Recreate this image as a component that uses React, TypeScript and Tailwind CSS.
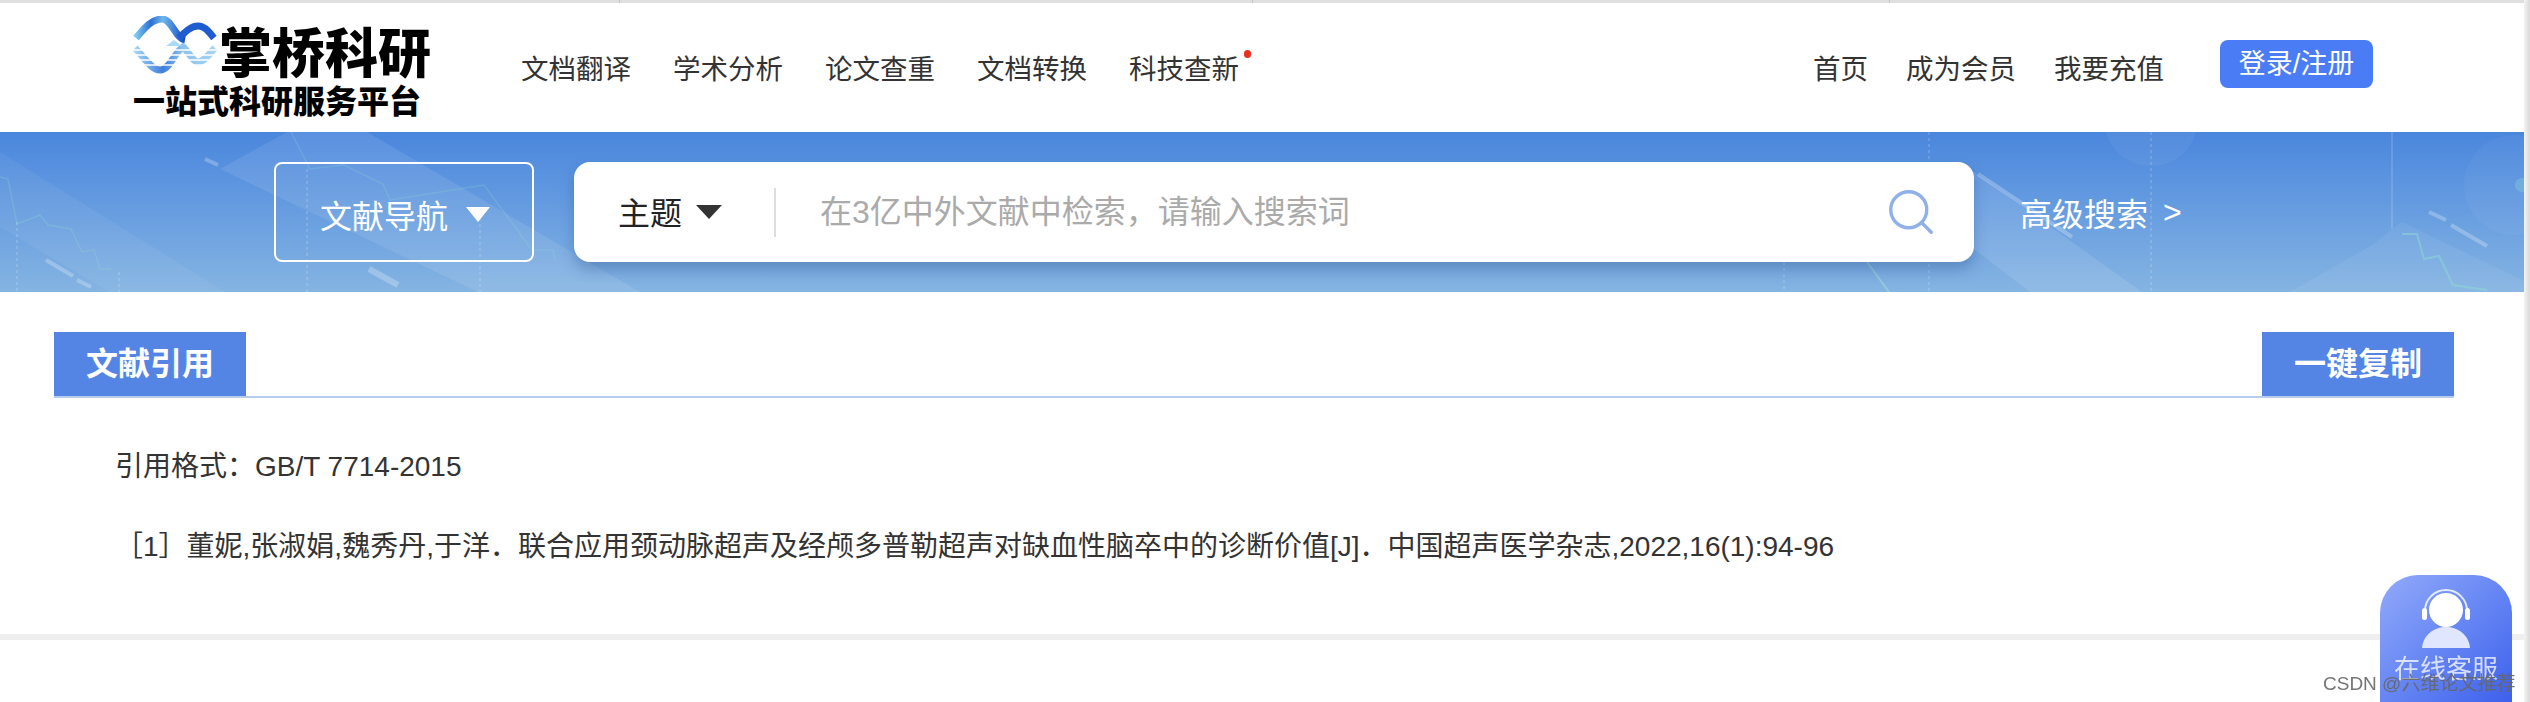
import { Search } from 'lucide-react';

const cjk = "font-['Liberation_Sans','Noto_Sans_CJK_SC',sans-serif]";

const leftNav = ['文档翻译', '学术分析', '论文查重', '文档转换', '科技查新'];
const rightNav = ['首页', '成为会员', '我要充值'];

function Logo() {
  return (
    <div className="w-[300px] shrink-0 pt-[13px]">
      <div className="flex items-start">
        <svg width="84" height="58" viewBox="0 0 84 58" className="shrink-0" fill="none">
          <defs>
            <linearGradient id="waveTop" x1="0" y1="0" x2="1" y2="0">
              <stop offset="0" stopColor="#7cc8f0" />
              <stop offset="0.3" stopColor="#2c6fd6" />
              <stop offset="0.55" stopColor="#6fb8ec" />
              <stop offset="1" stopColor="#1448c4" />
            </linearGradient>
            <linearGradient id="waveBottom" x1="0" y1="0" x2="1" y2="0">
              <stop offset="0" stopColor="#a6d6f4" />
              <stop offset="0.35" stopColor="#3f7fdc" />
              <stop offset="0.6" stopColor="#8cc4ee" />
              <stop offset="1" stopColor="#a6d4f2" />
            </linearGradient>
          </defs>
          <path d="M3 22 C10 14 18 3 29 3 C39 3 42 22 52 24" stroke="url(#waveTop)" strokeWidth="7" />
          <path d="M46 22 C52 16 58 10 65 10 C72 10 76 16 81 22" stroke="#1f5cd0" strokeWidth="7" />
          <path d="M2 32 C10 40 18 54 27 54 C37 54 40 38 50 31 C56 36 60 46 65 46 C71 46 76 38 82 32" stroke="url(#waveBottom)" strokeWidth="7" />
          <path d="M33 30 L41 24 L49 30 Z" fill="#a9dcf6" />
          <path d="M0 34 H84 M0 39 H84 M0 44 H84 M0 49 H84" stroke="#ffffff" strokeWidth="1.3" />
        </svg>
        <span className="ml-[2px] mt-[4px] text-[53px] leading-[60px] font-black text-black whitespace-nowrap font-['Noto_Sans_CJK_SC',serif]">掌桥科研</span>
      </div>
      <div className="mt-[2px] text-[32px] leading-[34px] font-black text-black whitespace-nowrap font-['Noto_Sans_CJK_SC',serif]">一站式科研服务平台</div>
    </div>
  );
}

function BannerArt() {
  return (
    <svg className="absolute inset-0 w-full h-full" viewBox="0 0 2530 160" preserveAspectRatio="none" fill="none">
      {/* light diagonal bands */}
      <path d="M220 37 L287 0 L367 0 L640 160 L478 160 Z" fill="#ffffff" fillOpacity="0.09" />
      <path d="M0 20 L225 160 L110 160 L0 95 Z" fill="#ffffff" fillOpacity="0.05" />
      <path d="M1960 30 L2142 160 L2030 160 L1900 60 Z" fill="#ffffff" fillOpacity="0.1" />
      <path d="M2372 113 L2402 90 L2530 152 L2530 160 L2290 160 Z" fill="#ffffff" fillOpacity="0.06" />
      <circle cx="2514" cy="53" r="50" fill="#ffffff" fillOpacity="0.04" />
      <circle cx="2151" cy="-13" r="47" fill="#ffffff" fillOpacity="0.05" />
      <circle cx="2522" cy="53" r="7" fill="#8fe0d0" fillOpacity="0.3" />
      {/* chart lines */}
      <path d="M0 45 L8 47 L17 92 L40 83 L48 93 L71 97 L82 120 L94 118 L100 137 L111 137" stroke="#8fe0d0" strokeOpacity="0.25" strokeWidth="1.5" />
      <path d="M291 0 L310 37 L344 33 L383 52 L390 68 L484 53 L532 118 L553 118 L555 128" stroke="#8fe0d0" strokeOpacity="0.22" strokeWidth="1.5" />
      <path d="M2402 102 L2417 102 L2424 127 L2439 124 L2453 153 L2487 158" stroke="#8fe0d0" strokeOpacity="0.45" strokeWidth="2" />
      <path d="M1867 130 L1889 160" stroke="#a5e0d5" strokeOpacity="0.5" strokeWidth="2" />
      {/* dashes */}
      <path d="M46 128 L73 144 M77 148 L91 155 M205 27 L218 33 M2429 80 L2446 88 M2451 93 L2487 114 M1978 42 L2072 105" stroke="#ffffff" strokeOpacity="0.25" strokeWidth="4" />
      <path d="M369 137 L398 153" stroke="#ffffff" strokeOpacity="0.25" strokeWidth="6" />
      {/* dotted verticals */}
      <path d="M17 90 V160 M119 140 V160 M307 37 V160 M480 80 V160 M1784 130 V160 M1929 0 V160 M2151 0 V160" stroke="#ffffff" strokeOpacity="0.2" strokeWidth="1.5" strokeDasharray="3 3" />
      <path d="M2392 0 V97" stroke="#ffffff" strokeOpacity="0.18" strokeWidth="1.5" />
    </svg>
  );
}

function SectionTitle() {
  return (
    <div className="flex justify-between ml-[54px] mr-[76px] h-[66px] border-b-2 border-[#b5cdee]">
      <div className="w-[192px] h-[64px] bg-[#5585e4] flex items-center justify-center text-white text-[32px] font-bold">文献引用</div>
      <div className="w-[192px] h-[64px] bg-[#5585e4] flex items-center justify-center text-white text-[32px] font-bold">一键复制</div>
    </div>
  );
}

function ChatButton() {
  return (
    <div className="fixed left-[2380px] top-[575px] w-[132px] h-[127px] rounded-t-[38px] overflow-hidden bg-gradient-to-br from-[#93aafa] to-[#3e5fec] flex flex-col items-center blur-[0.6px]">
      <svg width="48" height="60" viewBox="0 0 48 60" fill="none" className="mt-[14px]">
        <path d="M3 28 V22 A21 21 0 0 1 45 22 V28" stroke="#ffffff" strokeOpacity="0.8" strokeWidth="2" />
        <rect x="0" y="19" width="5" height="12" rx="2.5" fill="#fff" />
        <rect x="43" y="19" width="5" height="12" rx="2.5" fill="#fff" />
        <circle cx="24" cy="21" r="17" fill="#fff" />
        <path d="M0 59 C1 46 12 38 24 38 C36 38 47 46 48 59 Z" fill="#dfe6fd" />
      </svg>
      <div className="mt-[5px] text-[26px] leading-[30px] text-white/75 whitespace-nowrap">在线客服</div>
    </div>
  );
}

export default function App() {
  return (
    <div className={`${cjk} w-[2530px] h-[702px] overflow-hidden bg-white relative text-[#333]`}>
      <div className="h-[3px] flex bg-[#dfdfdf]">
        <div className="w-[620px] border-r border-[#c8c8c8]" />
        <div className="w-[633px] border-r border-[#c8c8c8]" />
        <div className="w-[637px] border-r border-[#c8c8c8]" />
      </div>

      {/* top nav */}
      <header className="h-[129px] flex pl-[133px]">
        <Logo />
        <nav className="flex items-center gap-[42px] ml-[88px] pt-[5px] text-[27.5px] text-[#333] h-full">
          {leftNav.map((item) => (
            <span key={item} className="relative whitespace-nowrap">
              {item}
              {item === '科技查新' && <i className="absolute right-[-12px] top-[1px] w-[7px] h-[8px] rounded-full bg-[#e8301f]" />}
            </span>
          ))}
        </nav>
        <nav className="ml-auto flex items-center gap-[38px] text-[27.5px] pt-[5px] h-full">
          {rightNav.map((item) => (
            <span key={item} className="whitespace-nowrap">{item}</span>
          ))}
          <button className="w-[153px] h-[48px] ml-[18px] mr-[157px] -mt-[12px] rounded-[8px] bg-[#4a7cf6] text-white text-[27px] leading-[48px]">登录/注册</button>
        </nav>
      </header>

      {/* search banner */}
      <section className="h-[160px] relative bg-gradient-to-b from-[#4a86dd] to-[#85b4e2] flex items-center pl-[274px]">
        <BannerArt />
        <div className="relative w-[260px] h-[100px] border-2 border-white rounded-[8px] flex items-center pl-[44px] text-white text-[32px]">
          <span className="mt-[10px]">文献导航</span>
          <span className="ml-[18px] mt-[4px] w-0 h-0 border-x-[12px] border-x-transparent border-t-[15px] border-t-white" />
        </div>
        <div className="relative ml-[40px] w-[1400px] h-[100px] rounded-[16px] bg-white flex items-center shadow-[0_8px_14px_rgba(40,80,140,0.35)]">
          <span className="ml-[44px] mt-[4px] text-[32px] text-[#222]">主题</span>
          <span className="ml-[14px] w-0 h-0 border-x-[13px] border-x-transparent border-t-[14px] border-t-[#333]" />
          <span className="ml-[52px] w-[2px] h-[49px] bg-[#dddddd]" />
          <span className="ml-[44px] text-[32px] text-[#aaaaaa] whitespace-nowrap">在3亿中外文献中检索，请输入搜索词</span>
          <Search size={54} strokeWidth={1.5} className="ml-auto mr-[36px] text-[#8fb0e8]" />
        </div>
        <div className="relative ml-[46px] mt-[6px] text-white text-[32px] whitespace-nowrap">高级搜索<span className="ml-[15px] inline-block -translate-y-[3px]">&gt;</span></div>
      </section>

      {/* citation */}
      <section className="pt-[40px]">
        <SectionTitle />
        <div className="mt-[53px] pl-[115px] text-[28px] leading-[32px] text-[#333]">引用格式：GB/T 7714-2015</div>
        <div className="mt-[48px] pl-[115px] text-[28px] leading-[32px] text-[#333] whitespace-nowrap">［1］董妮,张淑娟,魏秀丹,于洋．联合应用颈动脉超声及经颅多普勒超声对缺血性脑卒中的诊断价值[J]．中国超声医学杂志,2022,16(1):94-96</div>
      </section>

      <div className="absolute left-0 right-0 top-[634px] h-[6px] bg-[#eeeeee]" />
      <div className="absolute right-0 top-0 bottom-0 w-[6px] bg-gradient-to-r from-[#f4f4f4] to-[#d8d8d8]" />
      <ChatButton />
      <div className="fixed left-[2323px] top-[672px] text-[19px] leading-[24px] text-[#666]/90 whitespace-nowrap">CSDN @六维论文推荐</div>
    </div>
  );
}
